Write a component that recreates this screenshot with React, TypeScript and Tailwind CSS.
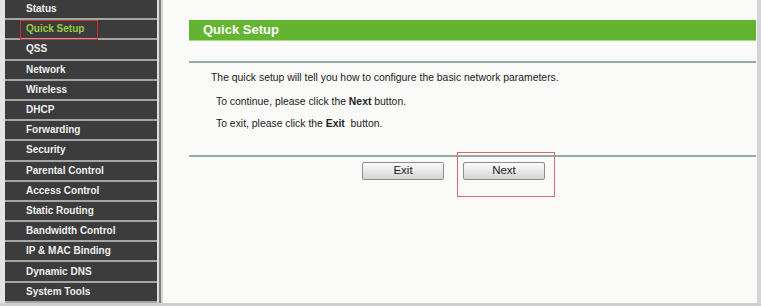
const menuItems = [
  "Status",
  "Quick Setup",
  "QSS",
  "Network",
  "Wireless",
  "DHCP",
  "Forwarding",
  "Security",
  "Parental Control",
  "Access Control",
  "Static Routing",
  "Bandwidth Control",
  "IP & MAC Binding",
  "Dynamic DNS",
  "System Tools",
];

function Sidebar() {
  return (
    <ul className="w-[152px] flex flex-col bg-[#3c3c3c]">
      {menuItems.map((item) => {
        const active = item === "Quick Setup";
        return (
          <li
            key={item}
            className="relative h-[20.2px] flex items-center pl-[21px] border-b-2 border-[#a6a6a6] text-[10px] font-bold leading-none"
          >
            <span className={active ? "text-[#9ccc3c]" : "text-[#f0f0f0]"}>{item}</span>
            {active && (
              <span className="absolute left-[15px] top-[0px] w-[78px] h-[20px] border border-[#d02a2a]" />
            )}
          </li>
        );
      })}
    </ul>
  );
}

function Button({ label }: { label: string }) {
  return (
    <button className="w-[82px] h-[18px] border border-[#8c8c8c] rounded-[2px] bg-gradient-to-b from-[#fbfbfb] to-[#d4d4d4] text-[11.5px] leading-none text-[#222]">
      {label}
    </button>
  );
}

export default function App() {
  return (
    <div
      className="w-[761px] h-[306px] flex flex-col bg-[#cfcfcf] overflow-hidden"
      style={{ fontFamily: '"Liberation Sans", Arial, sans-serif' }}
    >
      <div className="flex h-[303px]">
        <div className="w-[5px] bg-[#e4e4e4]" />
        <Sidebar />
        <div className="w-[6px] flex">
          <div className="w-[2px] bg-[#dcdcdc]" />
          <div className="w-[2px] bg-[#7c7c7c]" />
          <div className="w-[2px] bg-[#d6d6d6]" />
        </div>
        <main className="flex-1 bg-[#fafaf8] pl-[26px] pr-[1px] pt-[20px] relative">
          <div className="h-[21px] bg-[#63b531] border-b border-[#a8d880] flex items-center pl-[14px] text-[13px] font-bold text-white">
            Quick Setup
          </div>
          <div className="mt-[20px] h-[2px] bg-[#93aaa6]" />
          <div className="text-[10.4px] text-[#222] leading-none">
            <p className="mt-[10px] pl-[22px]">
              The quick setup will tell you how to configure the basic network parameters.
            </p>
            <p className="mt-[13.5px] pl-[27px]">
              To continue, please click the <b>Next</b> button.
            </p>
            <p className="mt-[11.5px] pl-[27px]">
              To exit, please click the <b>Exit</b>&nbsp; button.
            </p>
          </div>
          <div className="mt-[26px] h-[2px] bg-[#93aaa6]" />
          <div className="mt-[5px] flex gap-[19px] pl-[173px]">
            <Button label="Exit" />
            <Button label="Next" />
          </div>
          <span className="absolute left-[294px] top-[152px] w-[98px] h-[45px] border border-[#d86a6a]" />
        </main>
        <div className="w-[4px] bg-[#d4d4d4]" />
      </div>
    </div>
  );
}
